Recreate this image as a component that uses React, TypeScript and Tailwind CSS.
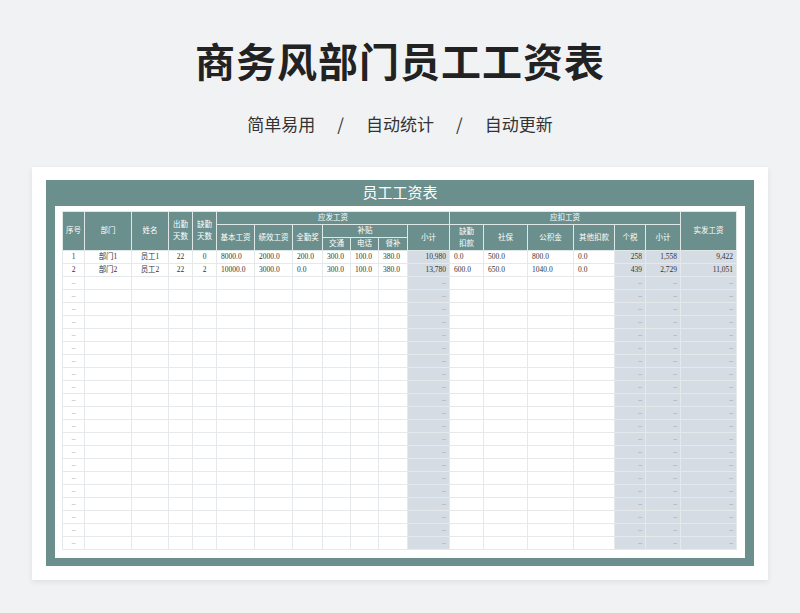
import React from "react";

const widths = [22, 47, 37, 24, 24, 38, 38, 30, 28, 28, 29, 42, 34, 44, 46, 41, 31, 35, 56];
const hl = new Set([11, 16, 17, 18]);
const H = "border border-[#dfe8e6] bg-[#6a8f8c] text-white font-normal leading-[12px] p-0";

export default function App() {
  const data: string[][] = [
    ["1", "部门1", "员工1", "22", "0", "8000.0", "2000.0", "200.0", "300.0", "100.0", "380.0", "10,980", "0.0", "500.0", "800.0", "0.0", "258", "1,558", "9,422"],
    ["2", "部门2", "员工2", "22", "2", "10000.0", "3000.0", "0.0", "300.0", "100.0", "380.0", "13,780", "600.0", "650.0", "1040.0", "0.0", "439", "2,729", "11,051"],
  ];
  for (let i = 0; i < 21; i++) {
    data.push(widths.map((_, j) => (j === 0 || j === 11 || j >= 16 ? "–" : "")));
  }
  const align = (j: number) => (j === 11 || j >= 16 ? "text-right pr-[3px]" : j >= 5 ? "text-left pl-[4px]" : "text-center");
  return (
    <div className="w-[800px] h-[613px] bg-[#f1f2f4] flex flex-col items-center" style={{ fontFamily: '"Noto Sans CJK SC", sans-serif' }}>
      <div className="mt-[34px] text-[40px] font-bold text-[#222] leading-[52px] tracking-[1px]">商务风部门员工工资表</div>
      <div className="mt-[26px] text-[17px] text-[#333] leading-[24px] flex gap-[22px]">
        <span>简单易用</span><span>/</span><span>自动统计</span><span>/</span><span>自动更新</span>
      </div>
      <div className="mt-[31px] w-[736px] h-[413px] bg-white shadow-[0_2px_6px_rgba(0,0,0,0.08)] pt-[13px] px-[14px]">
        <div className="bg-[#6a8f8c] h-[386px] flex flex-col px-[9px] pb-[9px]">
          <div className="h-[26px] text-white text-[15px] leading-[26px] text-center" style={{ fontFamily: '"Liberation Serif", "Noto Sans CJK SC", serif' }}>员工工资表</div>
          <div className="flex-1 bg-white px-[7px] pt-[5px] pb-[8px]">
            <table className="border-collapse table-fixed text-[7.5px] text-[#333] border border-[#b8c4c2]" style={{ width: 674, fontFamily: '"Liberation Serif", "Noto Sans CJK SC", serif' }}>
              <colgroup>{widths.map((w, i) => <col key={i} style={{ width: w }} />)}</colgroup>
              <thead>
                <tr className="h-[13px]">
                  <th rowSpan={3} className={H}>序号</th>
                  <th rowSpan={3} className={H}>部门</th>
                  <th rowSpan={3} className={H}>姓名</th>
                  <th rowSpan={3} className={H}>出勤<br />天数</th>
                  <th rowSpan={3} className={H}>缺勤<br />天数</th>
                  <th colSpan={7} className={H}>应发工资</th>
                  <th colSpan={6} className={H}>应扣工资</th>
                  <th rowSpan={3} className={H}>实发工资</th>
                </tr>
                <tr className="h-[13px]">
                  <th rowSpan={2} className={H}>基本工资</th>
                  <th rowSpan={2} className={H}>绩效工资</th>
                  <th rowSpan={2} className={H}>全勤奖</th>
                  <th colSpan={3} className={H}>补贴</th>
                  <th rowSpan={2} className={H}>小计</th>
                  <th rowSpan={2} className={H}>缺勤<br />扣款</th>
                  <th rowSpan={2} className={H}>社保</th>
                  <th rowSpan={2} className={H}>公积金</th>
                  <th rowSpan={2} className={H}>其他扣款</th>
                  <th rowSpan={2} className={H}>个税</th>
                  <th rowSpan={2} className={H}>小计</th>
                </tr>
                <tr className="h-[13px]">
                  <th className={H}>交通</th>
                  <th className={H}>电话</th>
                  <th className={H}>餐补</th>
                </tr>
              </thead>
              <tbody>
                {data.map((r, i) => (
                  <tr key={i} className="h-[13px]">
                    {r.map((c, j) => (
                      <td key={j} className={`border border-[#e6e9ec] p-0 leading-[12px] whitespace-nowrap overflow-hidden ${align(j)} ${hl.has(j) ? "bg-[#d6dce4]" : ""} ${c === "–" ? "text-[#999]" : ""}`}>{c}</td>
                    ))}
                  </tr>
                ))}
              </tbody>
            </table>
          </div>
        </div>
      </div>
    </div>
  );
}
